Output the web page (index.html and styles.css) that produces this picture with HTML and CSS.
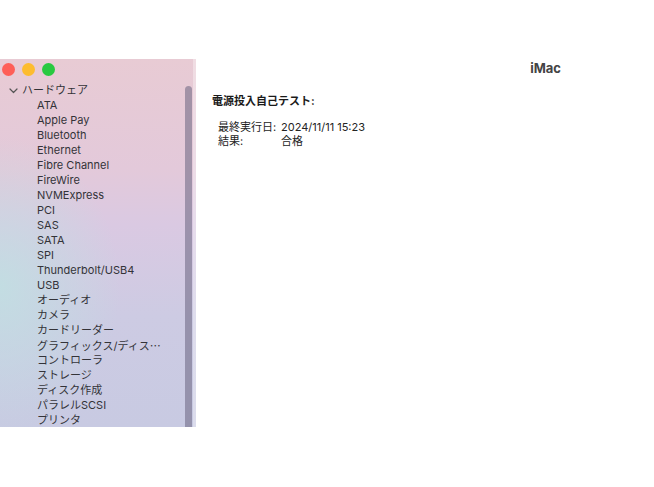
FILE: index.html
```html
<!DOCTYPE html>
<html lang="ja">
<head>
<meta charset="utf-8">
<title>システム情報</title>
<link rel="stylesheet" href="styles.css">
</head>
<body>
<div class="window">
  <aside class="sidebar">
    <div class="titlebar">
      <span class="dot red"></span>
      <span class="dot yellow"></span>
      <span class="dot green"></span>
    </div>
    <ul class="tree">
      <li class="group">
        <svg class="chev" width="9" height="6" viewBox="0 0 9 6"><path d="M1 1 L4.5 4.5 L8 1" fill="none" stroke="#555" stroke-width="1.2" stroke-linecap="round" stroke-linejoin="round"/></svg>
        <span>ハードウェア</span>
      </li>
      <li class="item">ATA</li>
      <li class="item">Apple Pay</li>
      <li class="item">Bluetooth</li>
      <li class="item">Ethernet</li>
      <li class="item">Fibre Channel</li>
      <li class="item">FireWire</li>
      <li class="item">NVMExpress</li>
      <li class="item">PCI</li>
      <li class="item">SAS</li>
      <li class="item">SATA</li>
      <li class="item">SPI</li>
      <li class="item">Thunderbolt/USB4</li>
      <li class="item">USB</li>
      <li class="item">オーディオ</li>
      <li class="item">カメラ</li>
      <li class="item">カードリーダー</li>
      <li class="item">グラフィックス/ディス<span class="cjk">…</span></li>
      <li class="item">コントローラ</li>
      <li class="item">ストレージ</li>
      <li class="item">ディスク作成</li>
      <li class="item">パラレルSCSI</li>
      <li class="item">プリンタ</li>
    </ul>
    <div class="scroll-thumb"></div>
    <div class="edge"></div>
  </aside>
  <main class="main">
    <div class="title">iMac</div>
    <div class="heading">電源投入自己テスト:</div>
    <div class="info">
      <div class="row"><span class="label">最終実行日:</span><span class="value">2024/11/11 15:23</span></div>
      <div class="row"><span class="label">結果:</span><span class="value">合格</span></div>
    </div>
  </main>
</div>
</body>
</html>
```
FILE: styles.css
```css
html, body {
  margin: 0;
  padding: 0;
  background: #ffffff;
}
body {
  font-family: Inter, "Liberation Sans", "Noto Sans CJK JP", sans-serif;
  color: #242424;
  font-size: 11px;
  padding-top: 59px;
}
.window {
  display: flex;
  height: 368px;
}
.sidebar {
  position: relative;
  width: 196px;
  flex: none;
  overflow: hidden;
  background:
    radial-gradient(ellipse 120px 150px at 0% 62%, rgba(192, 224, 226, 0.85), rgba(192, 224, 226, 0) 100%),
    linear-gradient(180deg, #e8cbd4 0%, #e3c9da 30%, #dac9e2 45%, #cdcbe3 70%, #c8cae2 100%);
}
.titlebar {
  height: 24px;
  display: flex;
  align-items: flex-start;
  gap: 7px;
  padding: 4px 0 0 2px;
  box-sizing: border-box;
}
.dot {
  width: 13px;
  height: 13px;
  border-radius: 50%;
  display: block;
}
.red { background: #fe5f58; }
.yellow { background: #fdbc2f; }
.green { background: #29c940; }
.tree {
  list-style: none;
  margin: 0;
  padding: 0;
}
.tree li {
  height: 15px;
  line-height: 15px;
  white-space: nowrap;
  color: #333338;
}
.cjk {
  font-family: "Noto Sans CJK JP", sans-serif;
}
.group {
  display: flex;
  align-items: center;
  padding-left: 9px;
}
.chev {
  margin-right: 4px;
  margin-top: 1px;
}
.item {
  padding-left: 37px;
}
.scroll-thumb {
  position: absolute;
  top: 27px;
  bottom: -10px;
  right: 4px;
  width: 7px;
  border-radius: 4px;
  background: rgba(105, 100, 128, 0.55);
}
.edge {
  position: absolute;
  top: 0;
  bottom: 0;
  right: 0;
  width: 3px;
  background: rgba(255, 255, 255, 0.35);
}
.main {
  flex: 1;
  padding-left: 16px;
}
.title {
  height: 18px;
  line-height: 18px;
  font-size: 13px;
  font-weight: 700;
  color: #444;
  text-align: right;
  padding-right: 93px;
}
.heading {
  margin-top: 17px;
  line-height: 14px;
  font-weight: 700;
  color: #1a1a1a;
}
.info {
  margin-top: 12px;
  padding-left: 6px;
}
.row {
  display: flex;
  line-height: 14px;
}
.label {
  width: 63px;
  flex: none;
}
```
